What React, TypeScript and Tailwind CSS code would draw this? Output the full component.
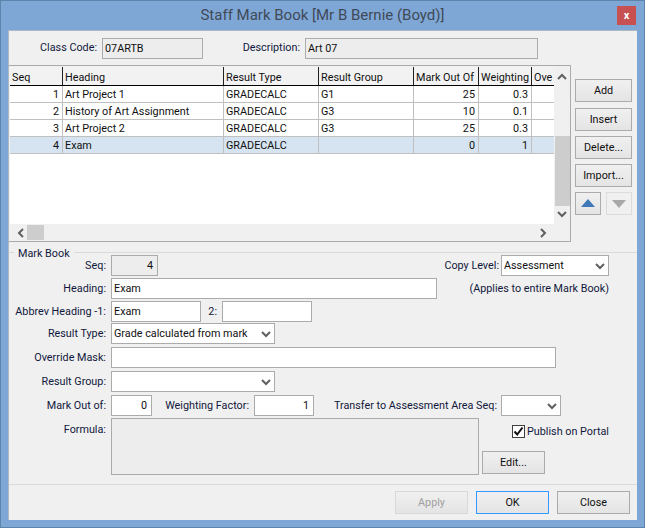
import React from "react";

const font = "font-['Roboto','Noto_Sans',sans-serif]";

function Chevron({ dir, className = "" }: { dir: "up" | "down" | "left" | "right"; className?: string }) {
  const d = {
    up: "M1 6 L5 2 L9 6",
    down: "M1 2 L5 6 L9 2",
    left: "M6 1 L2 5 L6 9",
    right: "M2 1 L6 5 L2 9",
  }[dir];
  const horizontal = dir === "left" || dir === "right";
  return (
    <svg width={horizontal ? 8 : 10} height={horizontal ? 10 : 8} viewBox={horizontal ? "0 0 8 10" : "0 0 10 8"} className={className}>
      <path d={d} fill="none" stroke="#606060" strokeWidth="2" />
    </svg>
  );
}

function Label({ children }: { children: React.ReactNode }) {
  return <div className="w-[100px] shrink-0 text-right pr-[3px] pt-[2px] text-[#10183c] whitespace-nowrap">{children}</div>;
}

function Input({ w, value = "", right, disabled }: { w: string; value?: string; right?: boolean; disabled?: boolean }) {
  return (
    <div
      className={`${w} h-[21px] shrink-0 border border-[#ababab] flex items-center px-[2px] pt-[2px] text-[#101010] ${right ? "justify-end pr-[4px]" : ""} ${disabled ? "bg-[#ededed]" : "bg-white"}`}
    >
      {value}
    </div>
  );
}

function Select({ w, value = "" }: { w: string; value?: string }) {
  return (
    <div className={`${w} h-[21px] shrink-0 border border-[#ababab] bg-white flex items-center justify-between pl-[2px] pr-[2px] text-[#101010]`}>
      <span className="whitespace-nowrap pt-[2px]">{value}</span>
      <Chevron dir="down" className="mr-[1px]" />
    </div>
  );
}

function Button({ children, w, disabled, primary }: { children: React.ReactNode; w: string; disabled?: boolean; primary?: boolean }) {
  return (
    <div
      className={`${w} h-[23px] shrink-0 flex items-center justify-center border pt-[2px] bg-gradient-to-b from-[#f0f0f0] to-[#e4e4e4] ${
        disabled ? "border-[#d8d8d8] text-[#a0a0a0]" : primary ? "border-[#3399ff] text-[#101010]" : "border-[#ababab] text-[#101010]"
      }`}
    >
      {children}
    </div>
  );
}

const cols = "grid-cols-[53px_161px_95px_95px_65px_53px_22px]";
const rows = [
  ["1", "Art Project 1", "GRADECALC", "G1", "25", "0.3"],
  ["2", "History of Art Assignment", "GRADECALC", "G3", "10", "0.1"],
  ["3", "Art Project 2", "GRADECALC", "G3", "25", "0.3"],
  ["4", "Exam", "GRADECALC", "", "0", "1"],
];
const heads = ["Seq", "Heading", "Result Type", "Result Group", "Mark Out Of", "Weighting", "Ove"];

export default function App() {
  return (
    <div className={`${font} w-[645px] h-[528px] bg-[#7fa7d6] border border-[#5f84ac] flex flex-col text-[10.8px] leading-none overflow-hidden`}>
      <div className="h-[29px] shrink-0 flex items-center relative">
        <div className="flex-1 text-center text-[15px] text-[#404a58]">Staff Mark Book [Mr B Bernie (Boyd)]</div>
        <div className="absolute right-[8px] top-[5px] w-[19px] h-[19px] bg-[#c75050] flex items-center justify-center text-white text-[11px] font-bold">x</div>
      </div>

      <div className="mx-[7px] h-[490px] shrink-0 bg-[#f0f0f0] border-l border-t border-[#aeb9c6] flex flex-col">
        <div className="h-[34px] shrink-0 flex items-center text-[#10183c] pt-[1px]">
          <div className="w-[93px] text-right pr-[5px] whitespace-nowrap">Class Code:</div>
          <Input w="w-[101px]" value="07ARTB" disabled />
          <div className="w-[102px] text-right pr-[5px] whitespace-nowrap">Description:</div>
          <Input w="w-[233px]" value="Art 07" disabled />
        </div>

        <div className="flex shrink-0">
          <div className="w-[562px] h-[177px] shrink-0 border-t border-r border-b border-[#ababab] flex flex-col">
            <div className="flex h-[158px] shrink-0">
              <div className="w-[544px] shrink-0 bg-white mt-[1px] ml-[1px] overflow-hidden">
                <div className={`grid ${cols} h-[19px] bg-[#f2f2f2] border-b border-black`}>
                  {heads.map((h, i) => (
                    <div key={h} className={`pl-[2px] pt-[4px] flex items-center whitespace-nowrap overflow-hidden text-[#101010] ${i < 6 ? "border-r border-[#202020]" : ""}`}>{h}</div>
                  ))}
                </div>
                {rows.map((r, idx) => (
                  <div key={idx} className={`grid ${cols} h-[17px] border-b border-[#c0c0c0] ${idx === 3 ? "bg-[#d6e4f1]" : ""}`}>
                    {r.map((c, i) => (
                      <div key={i} className={`flex items-center px-[2px] pt-[3px] whitespace-nowrap border-r border-[#c0c0c0] text-[#101010] ${i === 0 || i > 3 ? "justify-end pr-[3px]" : ""}`}>{c}</div>
                    ))}
                    <div />
                  </div>
                ))}
              </div>
              <div className="flex-1 flex flex-col items-center pt-[5px] bg-[#f0f0f0]">
                <Chevron dir="up" className="mt-[2px]" />
                <div className="w-[15px] h-[70px] bg-[#cdcdcd] mt-[55px] mb-[4px]" />
                <Chevron dir="down" />
              </div>
            </div>
            <div className="flex-1 flex items-center justify-between pl-[8px] pr-[23px]">
              <div className="flex items-center gap-[2px]">
                <Chevron dir="left" />
                <div className="w-[17px] h-[15px] bg-[#cdcdcd]" />
              </div>
              <Chevron dir="right" />
            </div>
          </div>

          <div className="ml-[4px] pt-[14px] flex flex-col gap-[5px]">
            <Button w="w-[57px]">Add</Button>
            <div className="mt-[1px]"><Button w="w-[57px]">Insert</Button></div>
            <Button w="w-[57px]">Delete...</Button>
            <Button w="w-[57px]">Import...</Button>
            <div className="flex justify-between">
              <div className="w-[26px] h-[23px] border border-[#ababab] bg-gradient-to-b from-[#f0f0f0] to-[#e4e4e4] flex items-center justify-center">
                <svg width="14" height="9" viewBox="0 0 14 9"><path d="M7 0 L14 8 L0 8 Z" fill="#3f78b8" /></svg>
              </div>
              <div className="w-[26px] h-[23px] border border-[#dcdcdc] flex items-center justify-center">
                <svg width="14" height="9" viewBox="0 0 14 9"><path d="M0 1 L14 1 L7 9 Z" fill="#a8a8a8" /></svg>
              </div>
            </div>
          </div>
        </div>

        <div className="relative mt-[10px] h-[233px] shrink-0 border-t border-b border-[#dadada] flex flex-col">
          <div className="absolute left-[5px] -top-[6px] bg-[#f0f0f0] px-[4px] pt-[2px] h-[12px] flex items-center text-[#10183c]">Mark Book</div>

          <div className="mt-[2px] h-[21px] flex items-center">
            <Label>Seq:</Label>
            <Input w="w-[47px] ml-[2px]" value="4" right disabled />
            <div className="ml-auto flex items-center mr-[28px]">
              <span className="text-[#10183c] mr-[2px] pt-[1px]">Copy Level:</span>
              <Select w="w-[108px]" value="Assessment" />
            </div>
          </div>
          <div className="mt-[2px] h-[21px] flex items-center">
            <Label>Heading:</Label>
            <Input w="w-[326px] ml-[2px]" value="Exam" />
            <div className="ml-auto mr-[28px] pt-[2px] text-[#10183c]">(Applies to entire Mark Book)</div>
          </div>
          <div className="mt-[2px] h-[21px] flex items-center">
            <Label>Abbrev Heading -1:</Label>
            <Input w="w-[90px] ml-[2px]" value="Exam" />
            <div className="w-[21px] text-right pr-[5px] pt-[2px] text-[#10183c]">2:</div>
            <Input w="w-[90px]" />
          </div>
          <div className="mt-[1px] h-[21px] flex items-center">
            <Label>Result Type:</Label>
            <Select w="w-[164px] ml-[2px]" value="Grade calculated from mark" />
          </div>
          <div className="mt-[3px] h-[21px] flex items-center">
            <Label>Override Mask:</Label>
            <Input w="w-[445px] ml-[2px]" />
          </div>
          <div className="mt-[3px] h-[21px] flex items-center">
            <Label>Result Group:</Label>
            <Select w="w-[164px] ml-[2px]" />
          </div>
          <div className="mt-[3px] h-[21px] flex items-center">
            <Label>Mark Out of:</Label>
            <Input w="w-[41px] ml-[2px]" value="0" right />
            <div className="w-[102px] text-right pr-[5px] pt-[2px] text-[#10183c] whitespace-nowrap">Weighting Factor:</div>
            <Input w="w-[60px]" value="1" right />
            <div className="w-[187px] text-right pr-[4px] pt-[2px] text-[#10183c] whitespace-nowrap">Transfer to Assessment Area Seq:</div>
            <Select w="w-[60px]" />
          </div>
          <div className="mt-[2px] flex items-start">
            <div className="pt-[5px]"><Label>Formula:</Label></div>
            <div className="ml-[2px] w-[368px] h-[57px] shrink-0 bg-[#ededed] border border-[#ababab]" />
            <div className="flex flex-col">
              <div className="ml-[33px] mt-[7px] flex items-center gap-[2px] text-[#10183c] whitespace-nowrap">
                <div className="w-[13px] h-[13px] border border-[#404040] bg-white flex items-center justify-center">
                  <svg width="11" height="11" viewBox="0 0 11 11"><path d="M1.5 5.5 L4.2 8.5 L9.5 1.5" fill="none" stroke="#101010" strokeWidth="2" /></svg>
                </div>
                <span className="pt-[2px]">Publish on Portal</span>
              </div>
              <div className="ml-[3px] mt-[13px]"><Button w="w-[63px]">Edit...</Button></div>
            </div>
          </div>
        </div>

        <div className="flex-1 flex items-center justify-end gap-[8px] pr-[7px]">
          <Button w="w-[73px]" disabled>Apply</Button>
          <Button w="w-[73px]" primary>OK</Button>
          <Button w="w-[73px]">Close</Button>
        </div>
      </div>
    </div>
  );
}
